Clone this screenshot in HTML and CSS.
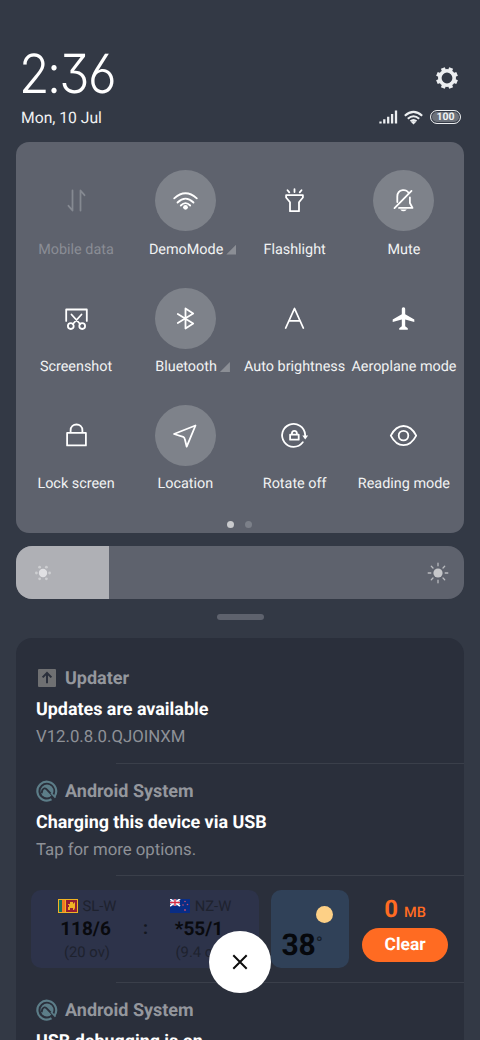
FILE: index.html
```html
<!DOCTYPE html>
<html lang="en">
<head>
<meta charset="utf-8">
<title>Control centre</title>
<link rel="stylesheet" href="styles.css">
</head>
<body>
<div class="screen">
  <header class="status">
    <div class="status-left">
      <div class="clock">2<span class="colon">:</span>36</div>
      <div class="date">Mon, 10 Jul</div>
    </div>
    <div class="status-right">
      <svg class="gear" viewBox="-12 -12 24 24"><circle r="7.2" fill="none" stroke="#eceef0" stroke-width="3.6"/><g fill="none" stroke="#eceef0" stroke-width="4.2"><path d="M0-8V-10.9M0 8V10.9M-8 0H-10.9M8 0H10.9" transform="rotate(22.5)"/><path d="M0-8V-10.9M0 8V10.9M-8 0H-10.9M8 0H10.9" transform="rotate(67.5)"/></g></svg>
      <div class="indicators">
        <svg class="signal" viewBox="0 0 19 14"><path d="M1.5 13.4V11.4M5.3 13.4V9.2M9.2 13.4V6.8M13.1 13.4V4M17 13.4V.6" stroke="#eceef0" stroke-width="2.3"/></svg>
        <svg class="wifi" viewBox="-9.5 -8 19 15"><g fill="none" stroke="#eceef0" stroke-width="2"><path d="M-8.7-2.3Q0-10 8.7-2.3M-5.7.8Q0-4.4 5.7.8M-3 3.3Q0 .7 3 3.3"/></g><path d="M-2.5 4Q0 2 2.5 4L0 6.6Z" fill="#eceef0"/></svg>
        <span class="battery">100</span>
      </div>
    </div>
  </header>

  <section class="panel">
    <div class="tiles">
      <div class="tile off"><svg class="ico" viewBox="-30.5 -30.5 61 61"><path d="M-4-10V10L-8 5.3M4 10V-10L8-5.3"/></svg><span>Mobile data</span></div>
      <div class="tile on"><svg class="ico" viewBox="-30.5 -30.5 61 61"><path d="M-11.3-2.2Q0-12.4 11.3-2.2M-8 2Q0-5.8 8 2M-4.7 5Q0 .2 4.7 5"/><circle class="fill" cy="6.8" r="2.4"/></svg><span>DemoMode<i class="more"></i></span></div>
      <div class="tile"><svg class="ico" viewBox="-30.5 -30.5 61 61"><path d="M-8.4-5.3H8.4V-3L4.5 1.8V10.7H-4.5V1.8L-8.4-3ZM0-11.3V-8.4M-7-10.3L-5.2-8.1M7-10.3L5.2-8.1"/></svg><span>Flashlight</span></div>
      <div class="tile on"><svg class="ico" viewBox="-30.5 -30.5 61 61"><path d="M-6.2 1.5V-4C-6-12 4-12 5.2-7M6.4-3V2.5L9 7.4H-4.5M-9 7.6L8-9.6"/><path class="fill" d="M-3.3 8.9H3.3Q0 12.6-3.3 8.9Z"/></svg><span>Mute</span></div>

      <div class="tile"><svg class="ico" viewBox="-30.5 -30.5 61 61"><path d="M-10.3 2.4V-9H10.3V2.4M-5-4L3.6 5.5M5-4L-3.6 5.5"/><circle cx="-5.7" cy="7.6" r="2.9"/><circle cx="5.7" cy="7.6" r="2.9"/></svg><span>Screenshot</span></div>
      <div class="tile on"><svg class="ico" viewBox="-30.5 -30.5 61 61"><path d="M-7.7-4.5L7.7 5L0 10V-10L7.7-5L-7.7 4.5"/></svg><span>Bluetooth<i class="more"></i></span></div>
      <div class="tile"><svg class="ico" viewBox="-30.5 -30.5 61 61"><path d="M-8.8 9.5L0-10L8.8 9.5M-5.5 2.4H5.5"/></svg><span>Auto brightness</span></div>
      <div class="tile"><svg class="ico" viewBox="-30.5 -30.5 61 61"><path class="fill" d="M0-11.2C1.2-11.2 1.7-10.4 1.7-9.3V-4.3L10.8 1V3.6L1.7 1V7.8L4.3 9.8V11.2H-4.3V9.8L-1.7 7.8V1L-10.8 3.6V1L-1.7-4.3V-9.3C-1.7-10.4-1.2-11.2 0-11.2Z"/></svg><span>Aeroplane mode</span></div>

      <div class="tile"><svg class="ico" viewBox="-30.5 -30.5 61 61"><path d="M-9.4-2.6H9.4V9.9H-9.4ZM-5.9-2.6V-5C-5.9-13 5.9-13 5.9-5V-2.6"/></svg><span>Lock screen</span></div>
      <div class="tile on"><svg class="ico" viewBox="-30.5 -30.5 61 61"><path d="M10-10L-11.5-1.5L-2.3 1.3Q-1 2-.7 3.5L1.2 11.2Z"/></svg><span>Location</span></div>
      <div class="tile"><svg class="ico" viewBox="-30.5 -30.5 61 61"><path d="M8.3 6.8A11.5 11.5 0 1 1 10.6-1V1M-4.4-.8H4.2V4.2H-4.4ZM-2.6-.8V-2C-2.6-5.6 2.4-5.6 2.4-2V-.8"/><path class="fill" d="M7.8 0H13.6L10.7 4Z"/></svg><span>Rotate off</span></div>
      <div class="tile"><svg class="ico" viewBox="-30.5 -30.5 61 61"><path d="M-12.7.1C-6-12.7 6-12.7 12.7.1C6 12.9-6 12.9-12.7.1Z"/><circle cy=".1" r="4.8"/></svg><span>Reading mode</span></div>
    </div>
    <div class="pager"><i class="dot active"></i><i class="dot"></i></div>
  </section>

  <section class="brightness">
    <div class="level">
      <svg class="sun" viewBox="-11 -11 22 22"><circle r="4.2" fill="#e0e0e3"/><g fill="#cdced1"><circle cx="-6.6" r="1.4"/><circle cx="6.6" r="1.4"/><circle cx="-3.4" cy="-5.8" r="1.4"/><circle cx="3.4" cy="-5.8" r="1.4"/><circle cx="-3.4" cy="5.8" r="1.4"/><circle cx="3.4" cy="5.8" r="1.4"/></g></svg>
    </div>
    <svg class="sun" viewBox="-11 -11 22 22"><circle r="4.6" fill="#c6c7ca"/><path d="M0-9.8V-7.2M0 9.8V7.2M-9.8 0H-7.2M9.8 0H7.2M-6.7-6.7L-5-5M6.7-6.7L5-5M-6.7 6.7L-5 5M6.7 6.7L5 5" stroke="#b9bbbf" stroke-width="1.3" stroke-linecap="round"/></svg>
  </section>
  <div class="handle"></div>

  <section class="notifications">
    <article class="note first">
      <div class="app"><svg class="app-ico" viewBox="0 0 22 22"><rect x="2" y="2" width="18" height="18" rx="1" fill="#6f7072"/><path d="M11 16.2V6.2M6.6 10.4L11 6L15.4 10.4" fill="none" stroke="#2a2f3b" stroke-width="2"/></svg><span>Updater</span></div>
      <div class="title">Updates are available</div>
      <div class="text">V12.0.8.0.QJOINXM</div>
    </article>
    <article class="note">
      <div class="app"><svg class="app-ico" viewBox="0 0 22 22"><path d="M15.5 19.3A9.4 9.4 0 1 1 18.6 16.4" fill="none" stroke="#5c7d88" stroke-width="2.2"/><circle cx="11" cy="11" r="6.5" fill="#5c7d88"/><path d="M5.6 13.2L6.4 10Q8.4 7.2 10.4 9.2L18 17" fill="none" stroke="#2a2f3b" stroke-width="1.9"/><path d="M15 13L19.5 17.6" stroke="#5c7d88" stroke-width="1.6"/></svg><span>Android System</span></div>
      <div class="title">Charging this device via USB</div>
      <div class="text">Tap for more options.</div>
    </article>
    <div class="widgets">
      <div class="score">
        <div class="team home">
          <div class="name"><svg class="flag" viewBox="0 0 20 14"><path fill="#f0b323" d="M0 0H20V14H0Z"/><path fill="#17705a" d="M1 1H4V13H1Z"/><path fill="#ef7b23" d="M4 1H7V13H4Z"/><path fill="#951f33" d="M8 1H19V13H8Z"/><path fill="#f0b323" d="M10 5H12V3H15V5L17 3V9L16 11H15V9H12V11H10V8H11V6H10Z"/></svg>SL-W</div>
          <div class="runs">118/6</div>
          <div class="overs">(20 ov)</div>
        </div>
        <div class="versus">:</div>
        <div class="team away">
          <div class="name"><svg class="flag" viewBox="0 0 20 14"><path fill="#092d85" d="M0 0H20V14H0Z"/><path d="M0 0L10 7M10 0L0 7" stroke="#fff" stroke-width="1.8"/><path d="M5 0V7M0 3.5H10" stroke="#fff" stroke-width="2.6"/><path d="M5 0V7M0 3.5H10" stroke="#d52d45" stroke-width="1.4"/><g fill="#c94b70"><circle cx="15" cy="2.5" r=".8"/><circle cx="13" cy="6" r=".8"/><circle cx="17.5" cy="5.5" r=".8"/><circle cx="15" cy="11" r=".9"/></g></svg>NZ-W</div>
          <div class="runs">*55/1</div>
          <div class="overs">(9.4 ov)</div>
        </div>
      </div>
      <div class="weather"><i class="moon"></i><div class="temp">38<span class="degree">°</span></div></div>
      <div class="cleaner"><div class="amount">0 <small>MB</small></div><div class="clear">Clear</div></div>
    </div>
    <article class="note">
      <div class="app"><svg class="app-ico" viewBox="0 0 22 22"><path d="M15.5 19.3A9.4 9.4 0 1 1 18.6 16.4" fill="none" stroke="#5c7d88" stroke-width="2.2"/><circle cx="11" cy="11" r="6.5" fill="#5c7d88"/><path d="M5.6 13.2L6.4 10Q8.4 7.2 10.4 9.2L18 17" fill="none" stroke="#2a2f3b" stroke-width="1.9"/><path d="M15 13L19.5 17.6" stroke="#5c7d88" stroke-width="1.6"/></svg><span>Android System</span></div>
      <div class="title">USB debugging is on</div>
    </article>
  </section>
  <div class="close"><svg viewBox="0 0 16 16"><path d="M1.3 1.3L14.7 14.7M14.7 1.3L1.3 14.7" stroke="#0c0c0c" stroke-width="2"/></svg></div>
</div>
</body>
</html>
```
FILE: styles.css
```css
* { box-sizing: border-box; }
body { margin: 0; background: #333945; font-family: Roboto, sans-serif; text-rendering: geometricPrecision; }
svg { display: block; flex: none; }
.screen { position: relative; width: 480px; height: 1040px; overflow: hidden; padding: 0 16px; background: #333945; color: #f1f2f3; }

.status { height: 142px; display: flex; justify-content: space-between; padding: 47px 3px 0 5px; }
.clock { height: 56px; margin-left: -2px; font: 300 54px/56px Inter, sans-serif; letter-spacing: -1.6px; font-feature-settings: "cv09", "cv03", "ss01"; color: #fff; transform: scaleX(.92); transform-origin: left; white-space: nowrap; }
.colon { margin: 0 -.5px 0 -1px; }
.date { font-size: 15.7px; line-height: 20px; margin-top: 5px; }
.status-right { display: flex; flex-direction: column; align-items: flex-end; padding-top: 19px; }
.gear { width: 24px; height: 24px; margin-right: 2px; }
.indicators { display: flex; align-items: center; height: 16px; margin-top: 19px; }
.signal { width: 19px; height: 14px; margin-right: 6px; }
.wifi { width: 19px; height: 15px; margin-right: 7px; }
.battery { width: 31px; height: 14px; border: 1.5px solid #eceef0; border-radius: 7px; font-size: 10.5px; line-height: 12px; font-weight: 700; text-align: center; background: #6c717a; box-shadow: inset 0 0 0 1px #333945; }

.panel { height: 391px; padding: 28.4px 5.4px 0; border-radius: 13px; background: #5e626d; }
.tiles { display: grid; grid-template-columns: repeat(4, 109.3px); grid-auto-rows: 117.3px; }
.tile { display: flex; flex-direction: column; align-items: center; white-space: nowrap; font-size: 14.4px; line-height: 20px; }
.tile span { margin-top: 8.2px; display: flex; }
.ico { width: 61px; height: 61px; border-radius: 50%; fill: none; stroke: #fff; stroke-width: 1.8; stroke-linejoin: round; stroke-linecap: round; }
.ico .fill { fill: #fff; stroke: none; }
.on .ico { background: #7e828a; }
.off { color: #8a8d95; }
.off .ico { stroke: #858991; }
.more { width: 10px; height: 10px; margin: 5px -14.5px 0 3px; background: #8b8e95; clip-path: polygon(100% 0, 100% 100%, 0 100%); }
.pager { display: flex; justify-content: center; gap: 11px; margin: -1.4px .4px 0 0; }
.dot { width: 7px; height: 7px; border-radius: 50%; background: #7c8089; }
.dot.active { background: #c9cacd; }

.brightness { display: flex; align-items: center; justify-content: space-between; height: 53px; margin-top: 13px; padding-right: 15.5px; border-radius: 16px; overflow: hidden; background: #5e626d; }
.level { width: 93px; height: 53px; display: flex; align-items: center; padding-left: 16px; background: #afb0b5; }
.sun { width: 22px; height: 22px; }
.handle { width: 47px; height: 6px; margin: 15px auto 0; border-radius: 3px; background: #5e626d; }

.notifications { height: 420px; margin-top: 18px; border-radius: 16px 16px 0 0; background: #2a2f3b; }
.note { padding: 15px 20px 0; height: 112px; }
.note.first { padding-top: 27px; height: 125px; }
.note + .note, .widgets, .widgets + .note { background: linear-gradient(#3a3f4a, #3a3f4a) 100px 0 / 348px 1px no-repeat; }
.app { display: flex; align-items: center; gap: 7px; height: 26px; font-size: 18px; font-weight: 700; color: #94979d; }
.app-ico { width: 22px; height: 22px; }
.title { font-size: 17.9px; font-weight: 700; line-height: 30px; margin-top: 4px; color: #fff; white-space: nowrap; }
.text { font-size: 16.75px; line-height: 24px; color: #8e9197; }
.widgets { display: flex; height: 107px; padding: 15px 16px 0 15px; }
.score { display: flex; width: 229px; height: 78px; border-radius: 10px; background: #2d334a; }
.team { text-align: center; }
.home { width: 112px; }
.away { width: 107px; }
.name { display: flex; align-items: center; justify-content: center; gap: 5px; height: 20px; margin-top: 6px; font-size: 14.8px; color: #1e222e; }
.flag { width: 20px; height: 14px; }
.runs { font-size: 19px; font-weight: 700; line-height: 24px; color: #090a0e; margin: 1px 3px 0 0; }
.overs { font-size: 14.8px; line-height: 22px; color: #1e222e; }
.versus { width: 4px; font-size: 18px; font-weight: 700; line-height: 24px; margin-top: 27px; color: #14171f; }
.weather { width: 78px; height: 78px; margin-left: 12px; padding: 16px 10px 0; border-radius: 10px; background: #304158; }
.moon { display: block; width: 17px; height: 17px; margin-left: 35px; border-radius: 50%; background: #fdd086; }
.temp { display: flex; font-size: 30px; line-height: 36px; font-weight: 700; margin-top: 5px; color: #06080c; }
.degree { font-size: 19px; font-weight: 400; line-height: 32px; color: #151c27; }
.cleaner { margin-left: 13px; width: 86px; }
.amount { height: 38px; line-height: 39px; font-size: 24px; font-weight: 700; color: #ff6b22; text-align: center; }
.amount small { font-size: 14.5px; font-weight: 500; }
.clear { height: 34px; border-radius: 17px; background: #ff6b22; color: #fff; font-size: 17.4px; font-weight: 700; line-height: 34px; text-align: center; }
.close { position: absolute; left: 209px; top: 931px; width: 62px; height: 62px; border-radius: 50%; background: #fff; display: flex; align-items: center; justify-content: center; }
.close svg { width: 16px; height: 16px; }
```
